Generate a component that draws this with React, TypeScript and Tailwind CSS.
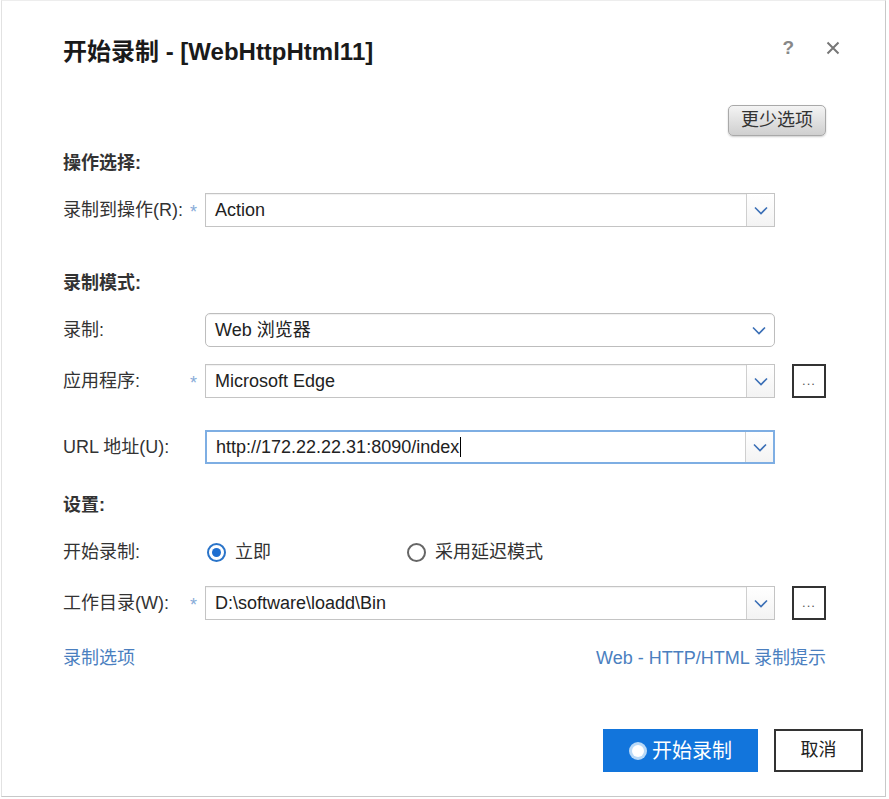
import React from 'react';

const Chevron = () => (
  <svg width="14" height="9" viewBox="0 0 14 9" fill="none">
    <path d="M1 1.5 L7 7.5 L13 1.5" stroke="#3b6fb6" strokeWidth="1.6" />
  </svg>
);

function Combo({ value, focused, caret }: { value: string; focused?: boolean; caret?: boolean }) {
  return (
    <div
      className={`flex h-[34px] w-[570px] items-stretch bg-white ${
        focused ? 'border-2 border-[#7eaee3]' : 'border border-[#c4c4c4] shadow-[inset_0_1px_1px_rgba(0,0,0,0.06)]'
      }`}
    >
      <div className="flex flex-1 items-center pl-[9px] text-[18px] text-[#222]">
        {value}
        {caret && <span className="ml-px inline-block h-[20px] w-px bg-black" />}
      </div>
      <div className="flex w-[28px] items-center justify-center border-l border-[#cfcfcf] bg-gradient-to-b from-white to-[#f3f3f3]">
        <Chevron />
      </div>
    </div>
  );
}

function Row({ label, star, children, extra }: { label: string; star?: boolean; children: React.ReactNode; extra?: boolean }) {
  return (
    <div className="flex h-[34px] items-center">
      <div className="flex w-[142px] items-center justify-between pr-[8px]">
        <span className="text-[18px] text-[#333]">{label}</span>
        {star && <span className="mt-[4px] text-[18px] text-[#86abd8]">*</span>}
      </div>
      {children}
      {extra && (
        <button className="ml-[17px] flex h-[34px] w-[34px] items-end justify-center border-2 border-[#333] bg-white pb-[9px] text-[13px] leading-none tracking-[1px] text-[#555]">
          ...
        </button>
      )}
    </div>
  );
}

function Section({ title, className }: { title: string; className: string }) {
  return <div className={`h-[24px] text-[18px] font-bold leading-[24px] text-[#333] ${className}`}>{title}</div>;
}

export default function App() {
  return (
    <div className="h-[799px] w-[889px] bg-white font-['Liberation_Sans','Noto_Sans_CJK_SC',sans-serif]">
      <div className="ml-[1px] h-[797px] w-[885px] border border-[#c8c8c8] border-l-[#e2e2e2] border-t-[#ededed]">
        <div className="pl-[61px] pr-[59px]">
          {/* header */}
          <div className="flex items-start pt-[35px]">
            <h1 className="flex-1 text-[24px] font-bold leading-[32px] text-[#1a1a1a]">开始录制 - [WebHttpHtml11]</h1>
            <div className="-mr-[14px] mt-[-2px] flex items-center gap-[32px] text-[#7a7a7a]">
              <span className="text-[19px] font-bold text-[#888]">?</span>
              <svg width="14" height="14" viewBox="0 0 14 14">
                <path d="M1.5 1.5 L12.5 12.5 M12.5 1.5 L1.5 12.5" stroke="#777" strokeWidth="2" />
              </svg>
            </div>
          </div>

          <div className="mt-[37px] flex justify-end">
            <button className="h-[31px] w-[98px] rounded-[5px] border border-[#a9a9a9] bg-gradient-to-b from-[#f4f4f4] to-[#cfcfcf] text-[18px] text-[#333] shadow-[0_1px_2px_rgba(0,0,0,0.2)]">
              更少选项
            </button>
          </div>

          <Section title="操作选择:" className="mt-[15px]" />
          <div className="mt-[18px]">
            <Row label="录制到操作(R):" star>
              <Combo value="Action" />
            </Row>
          </div>

          <Section title="录制模式:" className="mt-[44px]" />
          <div className="mt-[18px]">
            <Row label="录制:">
              <div className="flex h-[34px] w-[570px] items-center justify-between rounded-[5px] border border-[#bdbdbd] bg-white pl-[9px] pr-[8px] text-[18px] text-[#222] shadow-[inset_0_1px_1px_rgba(0,0,0,0.06)]">
                <span>Web 浏览器</span>
                <Chevron />
              </div>
            </Row>
          </div>
          <div className="mt-[17px]">
            <Row label="应用程序:" star extra>
              <Combo value="Microsoft Edge" />
            </Row>
          </div>
          <div className="mt-[32px]">
            <Row label="URL 地址(U):">
              <Combo value="http://172.22.22.31:8090/index" focused caret />
            </Row>
          </div>

          <Section title="设置:" className="mt-[29px]" />
          <div className="mt-[18px]">
            <Row label="开始录制:">
              <div className="flex items-center text-[18px] text-[#333]">
                <span className="ml-[2px] flex h-[19px] w-[19px] items-center justify-center rounded-full border-2 border-[#2a74c9]">
                  <span className="h-[9px] w-[9px] rounded-full bg-[#1f6fd0]" />
                </span>
                <span className="ml-[9px]">立即</span>
                <span className="ml-[136px] h-[19px] w-[19px] rounded-full border-2 border-[#666]" />
                <span className="ml-[9px]">采用延迟模式</span>
              </div>
            </Row>
          </div>
          <div className="mt-[17px]">
            <Row label="工作目录(W):" star extra>
              <Combo value="D:\software\loadd\Bin" />
            </Row>
          </div>

          <div className="mt-[26px] flex h-[24px] items-center justify-between text-[18px] text-[#4b7fbf]">
            <span>录制选项</span>
            <span>Web - HTTP/HTML 录制提示</span>
          </div>
        </div>

        <div className="mt-[59px] flex justify-end gap-[16px] pr-[22px]">
          <button className="flex h-[43px] w-[155px] items-center justify-center gap-[5px] bg-[#1275dc] text-[20px] text-white">
            <span className="flex h-[18px] w-[18px] items-center justify-center rounded-full bg-[#b9d9f7]">
              <span className="h-[12px] w-[12px] rounded-full bg-white" />
            </span>
            开始录制
          </button>
          <button className="h-[43px] w-[89px] border-2 border-[#333] bg-white text-[18px] text-[#222]">取消</button>
        </div>
      </div>
    </div>
  );
}
